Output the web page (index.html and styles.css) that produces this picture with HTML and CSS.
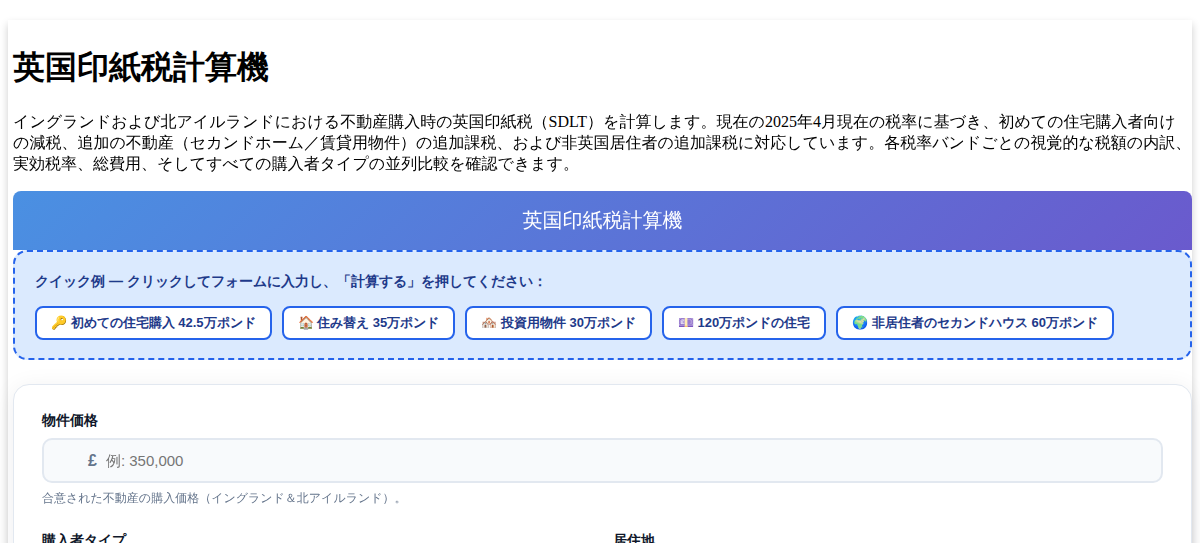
FILE: index.html
```html
<!DOCTYPE html>
<html lang="ja">
<head>
<meta charset="utf-8">
<title>英国印紙税計算機</title>
<link rel="stylesheet" href="styles.css">
</head>
<body>
<main class="page">
  <h1>英国印紙税計算機</h1>
  <p>イングランドおよび北アイルランドにおける不動産購入時の英国印紙税（SDLT）を計算します。現在の2025年4月現在の税率に基づき、初めての住宅購入者向けの減税、追加の不動産（セカンドホーム／賃貸用物件）の追加課税、および非英国居住者の追加課税に対応しています。各税率バンドごとの視覚的な税額の内訳、実効税率、総費用、そしてすべての購入者タイプの並列比較を確認できます。</p>
  <div class="banner">英国印紙税計算機</div>
  <section class="examples">
    <div class="examples-title">クイック例 — クリックしてフォームに入力し、「計算する」を押してください：</div>
    <div class="chips">
      <button type="button" class="chip">🔑 初めての住宅購入 42.5万ポンド</button>
      <button type="button" class="chip">🏠 住み替え 35万ポンド</button>
      <button type="button" class="chip">🏘️ 投資用物件 30万ポンド</button>
      <button type="button" class="chip">💷 120万ポンドの住宅</button>
      <button type="button" class="chip">🌍 非居住者のセカンドハウス 60万ポンド</button>
    </div>
  </section>
  <form class="card">
    <div class="field">
      <label for="price">物件価格</label>
      <div class="money">
        <span class="currency">£</span>
        <input id="price" type="text" inputmode="numeric" placeholder="例: 350,000">
      </div>
      <div class="hint">合意された不動産の購入価格（イングランド＆北アイルランド）。</div>
    </div>
    <div class="row">
      <div class="field">
        <label for="buyer">購入者タイプ</label>
        <select id="buyer"><option>住み替え</option></select>
      </div>
      <div class="field">
        <label for="residence">居住地</label>
        <select id="residence"><option>英国居住者</option></select>
      </div>
    </div>
  </form>
</main>
</body>
</html>
```
FILE: styles.css
```css
body {
  margin: 0;
  font-family: "Liberation Serif", "WenQuanYi Zen Hei", "Noto Sans CJK JP", serif;
}
.page {
  margin: 20px 8px;
  padding: 5px 0 20px 5px;
  background: #fff;
  box-shadow: 0 4px 8px rgba(0, 0, 0, 0.2);
}
h1 {
  margin: 21px 0 22px;
  font-family: "Liberation Serif", serif;
  font-size: 32px;
}
p { margin: 0 0 16px; }
.banner {
  padding: 15px;
  border-radius: 8px 8px 0 0;
  background: linear-gradient(135deg, #4a90e2, #6a5acd);
  color: #fff;
  font-size: 20px;
  line-height: 29px;
  text-align: center;
}
.card, input, select {
  font-family: "Liberation Sans", "WenQuanYi Zen Hei", "Noto Sans CJK JP", sans-serif;
}
.examples, .chip, label {
  font-family: "Liberation Sans", sans-serif;
}
.examples {
  margin-bottom: 24px;
  padding: 18px 20px;
  border: 2px dashed #2563eb;
  border-radius: 14px;
  background: #dbeafe;
}
.examples-title {
  margin-bottom: 14px;
  color: #1e3a8a;
  font-size: 14px;
  font-weight: 700;
  line-height: 22px;
}
.chips { display: flex; flex-wrap: wrap; gap: 10px; }
.chip {
  padding: 6px 14px;
  border: 2px solid #2563eb;
  border-radius: 8px;
  background: #fff;
  color: #1e3a8a;
  font-size: 13px;
  font-weight: 600;
  line-height: 18px;
}
.card {
  padding: 24px 28px;
  border: 1px solid #e2e8f0;
  border-radius: 16px;
  background: #fff;
  box-shadow: 0 4px 24px rgba(15, 23, 42, 0.07);
}
.field { display: flex; flex-direction: column; gap: 6px; }
label {
  color: #0f172a;
  font-size: 14px;
  font-weight: 700;
  line-height: 23px;
}
.money {
  display: flex;
  align-items: center;
  gap: 9px;
  padding-left: 44px;
  border: 2px solid #e2e8f0;
  border-radius: 10px;
  background: #f8fafc;
}
.currency { color: #64748b; font-size: 16px; font-weight: 700; }
.money input {
  flex: 1;
  min-width: 0;
  padding: 10px 14px 10px 0;
  border: 0;
  background: none;
  font-size: 15px;
  line-height: 21px;
}
.hint { color: #64748b; font-size: 12px; line-height: 18px; }
.row {
  display: grid;
  grid-template-columns: 1fr 1fr;
  gap: 20px;
  margin-top: 22px;
}
select {
  padding: 12px;
  border: 2px solid #e2e8f0;
  border-radius: 10px;
  background: #f8fafc;
  font-size: 15px;
}
```
